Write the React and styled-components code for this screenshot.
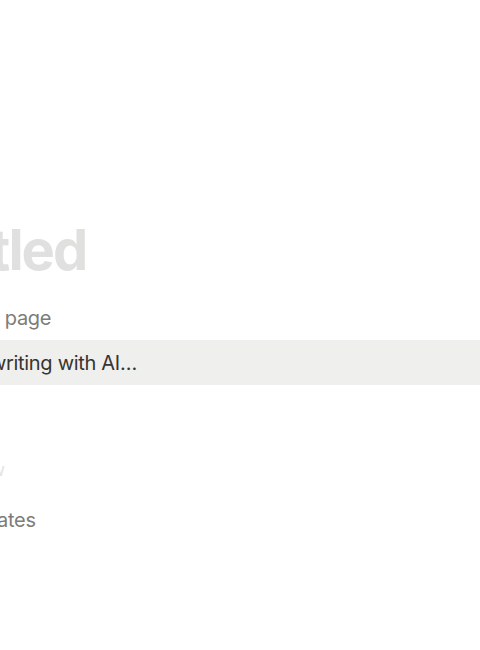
import React from "react";
import styled, { createGlobalStyle } from "styled-components";

const Global = createGlobalStyle`
  html, body { margin: 0; padding: 0; background: #ffffff; }
  body { font-family: Inter, "Noto Sans", sans-serif; -webkit-font-smoothing: antialiased; }
`;

const Viewport = styled.div`
  width: 480px;
  height: 650px;
  overflow: hidden;
  background: #ffffff;
`;

const Column = styled.div`
  width: 700px;
  margin-left: -110px;
  padding-top: 217px;
  display: flex;
  flex-direction: column;
`;

const Title = styled.h1`
  margin: 0 0 11px -4px;
  font-size: 56px;
  line-height: 67px;
  font-weight: 700;
  color: #e0e0df;
  letter-spacing: -0.035em;
`;

const Menu = styled.div`
  display: flex;
  flex-direction: column;
  margin-top: ${(p) => p.$gap || 0}px;
`;

const Row = styled.div`
  height: 45px;
  display: flex;
  align-items: center;
  padding-left: 51px;
  background: ${(p) => (p.$active ? "#efefee" : "transparent")};
  font-size: 20px;
  letter-spacing: -0.015em;
  color: ${(p) => (p.$active ? "#37352f" : "#7d7c78")};
`;

const Label = styled.div`
  height: 45px;
  margin-top: 62px;
  display: flex;
  align-items: center;
  padding-left: 44px;
  font-size: 17px;
  color: #e4e3e1;
`;

export default function App() {
  return (
    <>
      <Global />
      <Viewport>
        <Column>
          <Title>Untitled</Title>
          <Menu>
            <Row>Empty page</Row>
            <Row $active>Start writing with AI…</Row>
          </Menu>
          <Label>Add new</Label>
          <Menu $gap={5}>
            <Row>Templates</Row>
          </Menu>
        </Column>
      </Viewport>
    </>
  );
}
